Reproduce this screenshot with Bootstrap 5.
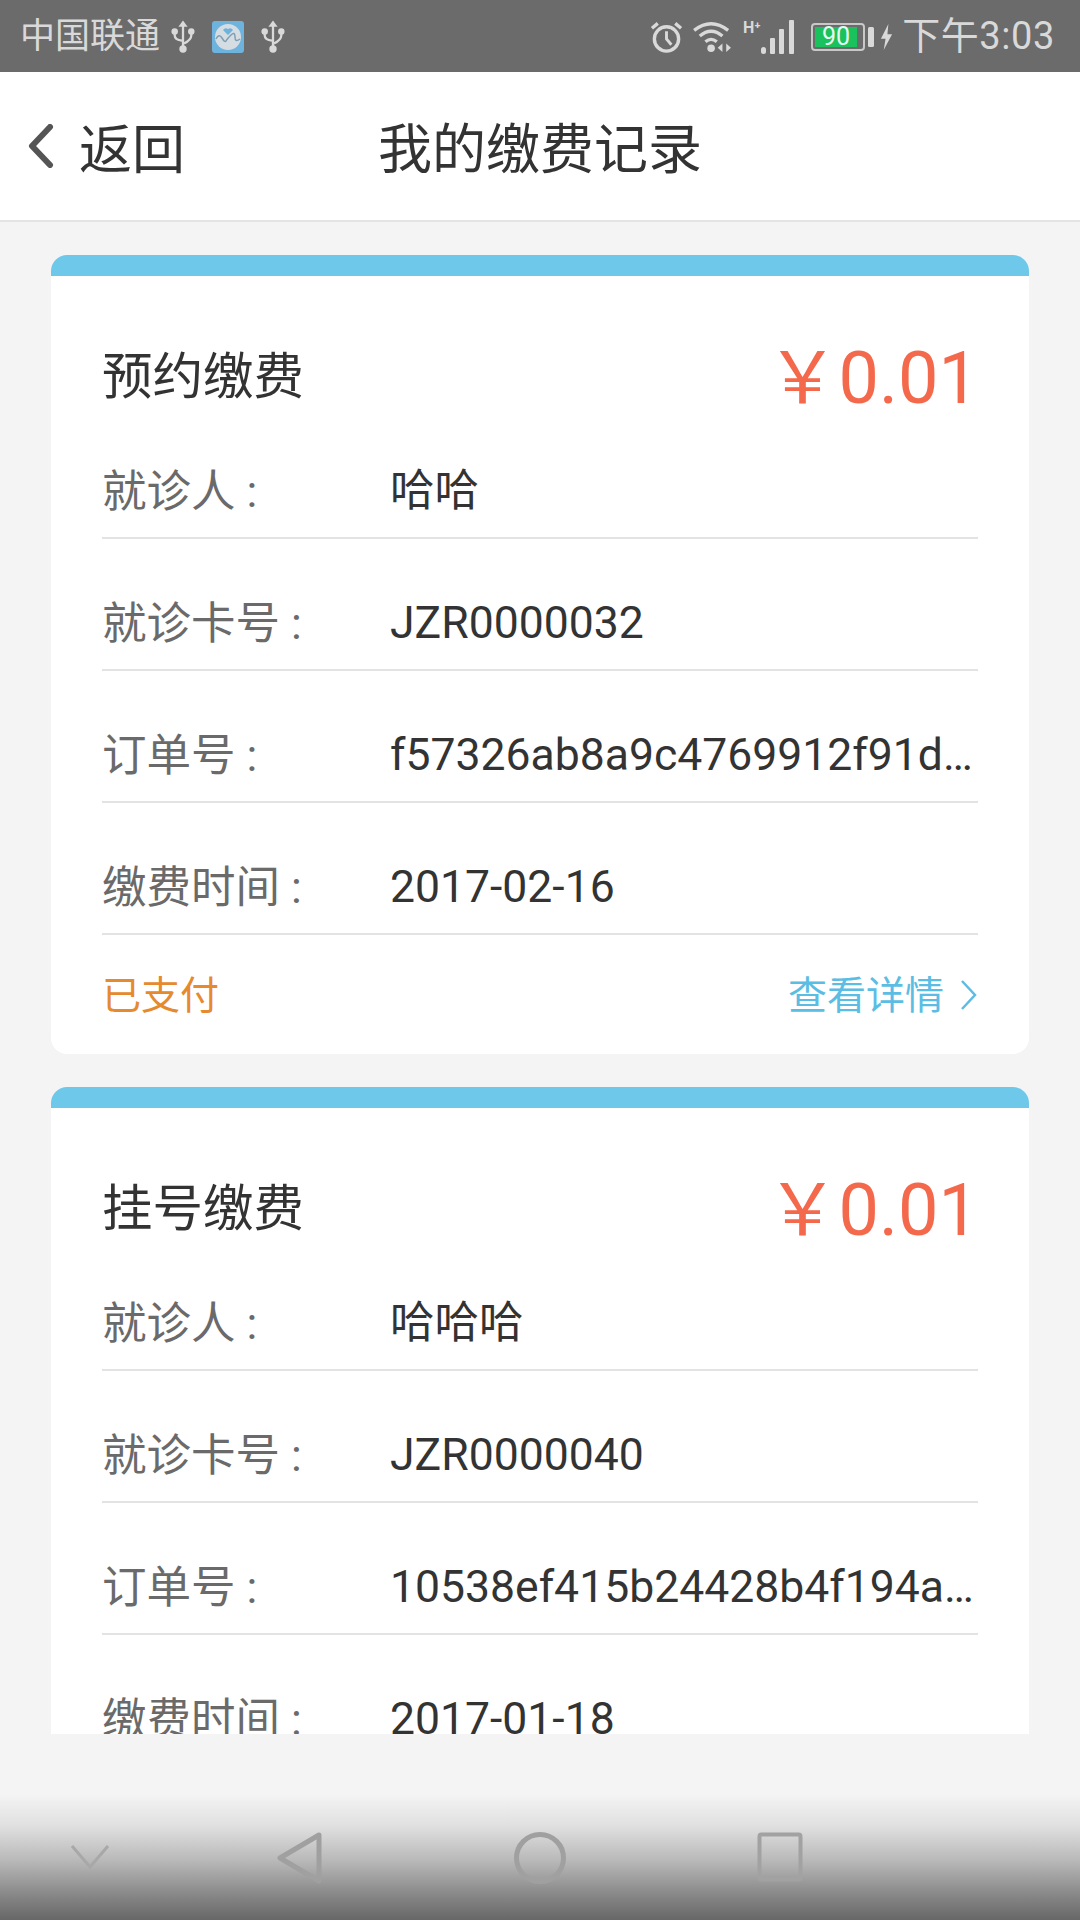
<!DOCTYPE html>
<html lang="zh-CN">
<head>
<meta charset="utf-8">
<title>我的缴费记录</title>
<link href="https://cdn.jsdelivr.net/npm/bootstrap@5.3.0/dist/css/bootstrap.min.css" rel="stylesheet">
<style>
html,body{margin:0;padding:0}
body{width:1080px;height:1920px;overflow:hidden;background:#f4f4f4;font-family:Roboto,"Noto Sans CJK SC",sans-serif;color:#333}
.shell{height:1920px}
.status-strip{height:72px;background:#6b6b6b;color:#d9d9d9;padding:2px 25px 0 20px;font-size:35px;line-height:70px}
.status-left{gap:17px}
.carrier{margin-right:-6px}
.alarm-ic{margin-right:10px}
.wifi-ic{margin-right:10px}
.sig-ic{margin-right:16px}
.tip-ic{margin:0 6px 0 3px}
.bolt-ic{margin-right:9px}
.clock{font-size:38px;letter-spacing:.6px;margin-top:-2px}
.batt-box{width:54px;height:28px;border:2px solid #c8c8c8;border-radius:4px;padding:2px 3px 2px 2px;display:flex}
.batt-fill{width:42px;background:#19c25c;color:#e9f8ee;font-size:25px;line-height:20px;text-align:center}
.top-head{height:150px;background:#fff;border-bottom:2px solid #e4e4e4;position:relative}
.back-area{position:absolute;left:27px;top:0;height:148px;gap:24px;font-size:53px;line-height:1;color:#333}
.back-text{padding-top:11px}
.page-title{font-size:54px;line-height:1;color:#333;margin-left:-1px;padding-top:10px}
.scroll-zone{height:1512px;overflow:hidden;padding:33px 51px 0}
.pay-card{background:#fff;border:0;border-radius:16px;overflow:hidden;margin-bottom:33px;height:799px;flex:none}
.pay-bar{height:21px;background:#6ec8ea}
.pay-body{padding:0 51px}
.pay-head{height:131px;padding-top:73px}
.pay-title{font-size:50.5px;line-height:1;color:#333;margin-top:-2px}
.pay-price{font-size:72px;line-height:1;color:#f4694c;margin-right:-1px;margin-top:2px}
.pay-line{height:132px;border-bottom:2px solid #e3e3e3;padding-bottom:18px;line-height:1.2}
.pay-label{width:288px;flex:none;color:#6a6a6a;font-size:44.5px}
.pay-value{min-width:0;flex:1;white-space:nowrap;overflow:hidden;text-overflow:ellipsis;color:#333;font-size:44.5px;padding-bottom:1px}
.pay-foot{height:117px;font-size:39px;line-height:1;padding-top:6px}
.pay-state{color:#e58a2e}
.pay-more{color:#5cbde4;gap:16px}
.more-ic{margin-top:-3px}
.soft-keys{height:186px;background:linear-gradient(to bottom,#f4f4f4 0,#f4f4f4 60px,#e0e0e0 92px,#b8b8b8 127px,#868686 162px,#676767 186px);padding-top:98px}
.key-first{width:180px}
.key-cell{width:240px}
</style>
</head>
<body>
<div class="shell d-flex flex-column">
  <div class="status-strip d-flex justify-content-between align-items-center">
    <div class="status-left d-flex align-items-center">
      <span class="carrier">中国联通</span>
      <svg width="24" height="36" viewBox="0 0 26 36"><g fill="none" stroke="#d9d9d9" stroke-width="2.5"><path d="M13 4V32"/><path d="M4 13V16Q4 21 12 22"/><path d="M22 13V16Q22 21 14 25"/></g><path d="M13 0l5 7H8z" fill="#d9d9d9"/><circle cx="13" cy="31" r="4" fill="#d9d9d9"/><circle cx="4" cy="12" r="3.5" fill="#d9d9d9"/><circle cx="22" cy="12" r="3.5" fill="#d9d9d9"/></svg>
      <svg width="32" height="32" viewBox="0 0 32 32"><rect width="32" height="32" rx="3" fill="#6db3dd"/><circle cx="16" cy="16" r="13" fill="#d5dde2"/><path d="M4 18q3-6 6-1t4 3 5-6 4 2 5 2" fill="none" stroke="#7e9fb3" stroke-width="1.5"/><path d="M16 14l-5-5q2-3 5-1 3-2 5 1z" fill="#6db3dd"/></svg>
      <svg width="24" height="36" viewBox="0 0 26 36"><g fill="none" stroke="#d9d9d9" stroke-width="2.5"><path d="M13 4V32"/><path d="M4 13V16Q4 21 12 22"/><path d="M22 13V16Q22 21 14 25"/></g><path d="M13 0l5 7H8z" fill="#d9d9d9"/><circle cx="13" cy="31" r="4" fill="#d9d9d9"/><circle cx="4" cy="12" r="3.5" fill="#d9d9d9"/><circle cx="22" cy="12" r="3.5" fill="#d9d9d9"/></svg>
    </div>
    <div class="d-flex align-items-center">
      <svg class="alarm-ic" width="33" height="34" viewBox="0 0 34 34"><circle cx="17" cy="19" r="12.5" fill="none" stroke="#d9d9d9" stroke-width="3.500"/><path d="M17 11v8l5 6" fill="none" stroke="#d9d9d9" stroke-width="3"/><path d="M2 8l6-5M32 8l-6-5" stroke="#d9d9d9" stroke-width="3.500"/></svg>
      <svg class="wifi-ic" width="40" height="34" viewBox="0 0 42 36"><g fill="none" stroke="#d9d9d9" stroke-width="3.500"><path d="M1 11Q19-3 37 11"/><path d="M7 17Q19 7 31 17"/><path d="M13 23Q19 18 25 23"/></g><circle cx="19" cy="30" r="4" fill="#d9d9d9"/><path d="M31 25v9l-5-4.500zM35 25v9l5-4.500z" fill="#d9d9d9"/></svg>
      <svg class="sig-ic" width="52" height="36" viewBox="0 0 52 36"><text x="0" y="14" font-family="Roboto,sans-serif" font-size="16" font-weight="700" fill="#d9d9d9">H⁺</text><g fill="#d9d9d9"><rect x="18" y="28" width="5" height="7" rx="2.500"/><rect x="27" y="19" width="5" height="16" rx="1"/><rect x="36" y="10" width="5" height="25" rx="1"/><rect x="46" y="1" width="5" height="34" rx="1"/></g></svg>
      <div class="batt-box"><div class="batt-fill">90</div></div>
      <svg class="tip-ic" width="6" height="20" viewBox="0 0 6 20"><rect width="6" height="20" rx="1.500" fill="#d9d9d9"/></svg>
      <svg class="bolt-ic" width="13" height="26" viewBox="0 0 12 28"><path d="M8 0L0 16h5l-2 12 9-17H7z" fill="#d9d9d9"/></svg>
      <span class="clock">下午3:03</span>
    </div>
  </div>
  <header class="top-head d-flex align-items-center justify-content-center">
    <div class="back-area d-flex align-items-center">
      <svg width="28" height="44" viewBox="0 0 28 44"><path d="M23 3L5 22l18 19" fill="none" stroke="#555" stroke-width="6" stroke-linecap="round" stroke-linejoin="round"/></svg>
      <span class="back-text">返回</span>
    </div>
    <h1 class="page-title m-0 fw-normal">我的缴费记录</h1>
  </header>
  <main class="scroll-zone d-flex flex-column">
    <section class="pay-card card">
      <div class="pay-bar"></div>
      <div class="pay-body">
        <div class="pay-head d-flex justify-content-between align-items-center">
          <span class="pay-title">预约缴费</span><span class="pay-price">￥0.01</span>
        </div>
        <div class="pay-line d-flex align-items-end"><span class="pay-label">就诊人 :</span><span class="pay-value">哈哈</span></div>
        <div class="pay-line d-flex align-items-end"><span class="pay-label">就诊卡号 :</span><span class="pay-value">JZR0000032</span></div>
        <div class="pay-line d-flex align-items-end"><span class="pay-label">订单号 :</span><span class="pay-value">f57326ab8a9c4769912f91d8a0c3e7b1</span></div>
        <div class="pay-line d-flex align-items-end"><span class="pay-label">缴费时间 :</span><span class="pay-value">2017-02-16</span></div>
        <div class="pay-foot d-flex justify-content-between align-items-center">
          <span class="pay-state">已支付</span>
          <span class="pay-more d-flex align-items-center">查看详情
            <svg class="more-ic" width="18" height="32" viewBox="0 0 18 32"><path d="M2 2l13 14L2 30" fill="none" stroke="#5cbde4" stroke-width="2.500"/></svg>
          </span>
        </div>
      </div>
    </section>
    <section class="pay-card card">
      <div class="pay-bar"></div>
      <div class="pay-body">
        <div class="pay-head d-flex justify-content-between align-items-center">
          <span class="pay-title">挂号缴费</span><span class="pay-price">￥0.01</span>
        </div>
        <div class="pay-line d-flex align-items-end"><span class="pay-label">就诊人 :</span><span class="pay-value">哈哈哈</span></div>
        <div class="pay-line d-flex align-items-end"><span class="pay-label">就诊卡号 :</span><span class="pay-value">JZR0000040</span></div>
        <div class="pay-line d-flex align-items-end"><span class="pay-label">订单号 :</span><span class="pay-value">10538ef415b24428b4f194a7c6d2e9f0</span></div>
        <div class="pay-line d-flex align-items-end"><span class="pay-label">缴费时间 :</span><span class="pay-value">2017-01-18</span></div>
      </div>
    </section>
  </main>
  <nav class="soft-keys d-flex align-items-start">
    <div class="key-first d-flex justify-content-center">
      <svg width="40" height="50" viewBox="0 0 40 50"><path d="M2 14l18 21 18-21" fill="none" stroke="#a8a8a8" stroke-width="3"/></svg>
    </div>
    <div class="key-cell d-flex justify-content-center">
      <svg width="48" height="52" viewBox="0 0 48 52"><path d="M43 3L4 26l39 23z" fill="none" stroke="#a0a0a0" stroke-width="5" stroke-linejoin="round"/></svg>
    </div>
    <div class="key-cell d-flex justify-content-center">
      <svg width="52" height="52" viewBox="0 0 52 52"><circle cx="26" cy="26" r="23.500" fill="none" stroke="#a0a0a0" stroke-width="5"/></svg>
    </div>
    <div class="key-cell d-flex justify-content-center">
      <svg width="46" height="50" viewBox="0 0 46 50"><rect x="2.500" y="2.500" width="41" height="45" rx="2" fill="none" stroke="#a2a2a2" stroke-width="4"/></svg>
    </div>
  </nav>
</div>
<script src="https://cdn.jsdelivr.net/npm/bootstrap@5.3.0/dist/js/bootstrap.bundle.min.js"></script>
</body>
</html>
